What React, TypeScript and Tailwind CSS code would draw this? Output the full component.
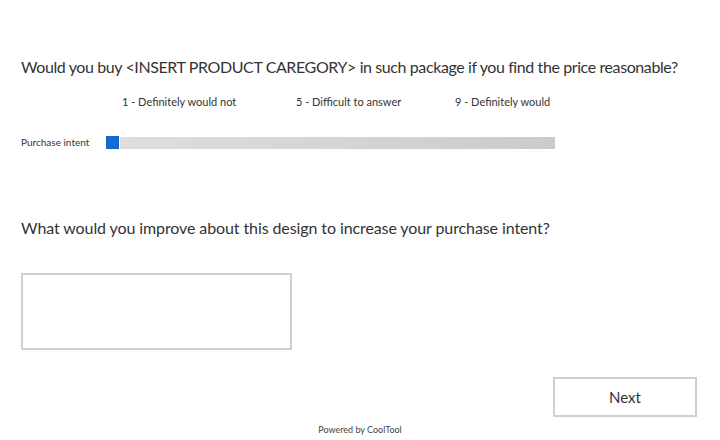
export default function App() {
  return (
    <div
      className="relative w-[720px] h-[440px] bg-white text-[#333] overflow-hidden"
      style={{ fontFamily: "Lato, 'Open Sans', sans-serif" }}
    >
      <div className="pt-[57px] pl-[21px]">
        <h2 className="text-[16px] leading-[20px] tracking-[-0.4px] whitespace-nowrap">
          Would you buy &lt;INSERT PRODUCT CAREGORY&gt; in such package if you find the price reasonable?
        </h2>

        <div className="flex mt-[18px] text-[11px] leading-[14px] text-[#333]">
          <span className="ml-[101px] w-[174px]">1 - Definitely would not</span>
          <span className="w-[159px]">5 - Difficult to answer</span>
          <span>9 - Definitely would</span>
        </div>

        <div className="flex items-center mt-[26px]">
          <span className="w-[85px] text-[10px] text-[#333]">Purchase intent</span>
          <div className="flex items-center h-[13px]">
            <div className="w-[13px] h-[13px] bg-[#0a6fdc] border border-[#1b5fb8]" />
            <div className="ml-px w-[435px] h-[12px] bg-gradient-to-r from-[#dedede] to-[#cbcbcb]" />
          </div>
        </div>

        <h2 className="mt-[68px] text-[16px] leading-[20px] tracking-[-0.1px] whitespace-nowrap">
          What would you improve about this design to increase your purchase intent?
        </h2>

        <textarea className="block mt-[35px] w-[271px] h-[77px] border-2 border-[#d0d0d0] resize-none outline-none" />
      </div>

      <div className="flex justify-end pr-[23px] mt-[27px]">
        <button className="w-[144px] h-[40px] border-2 border-[#cfcfcf] bg-white text-[15px] text-[#333]">
          Next
        </button>
      </div>

      <div className="text-center text-[9px] mt-[6px] text-[#444]">Powered by CoolTool</div>
    </div>
  );
}
